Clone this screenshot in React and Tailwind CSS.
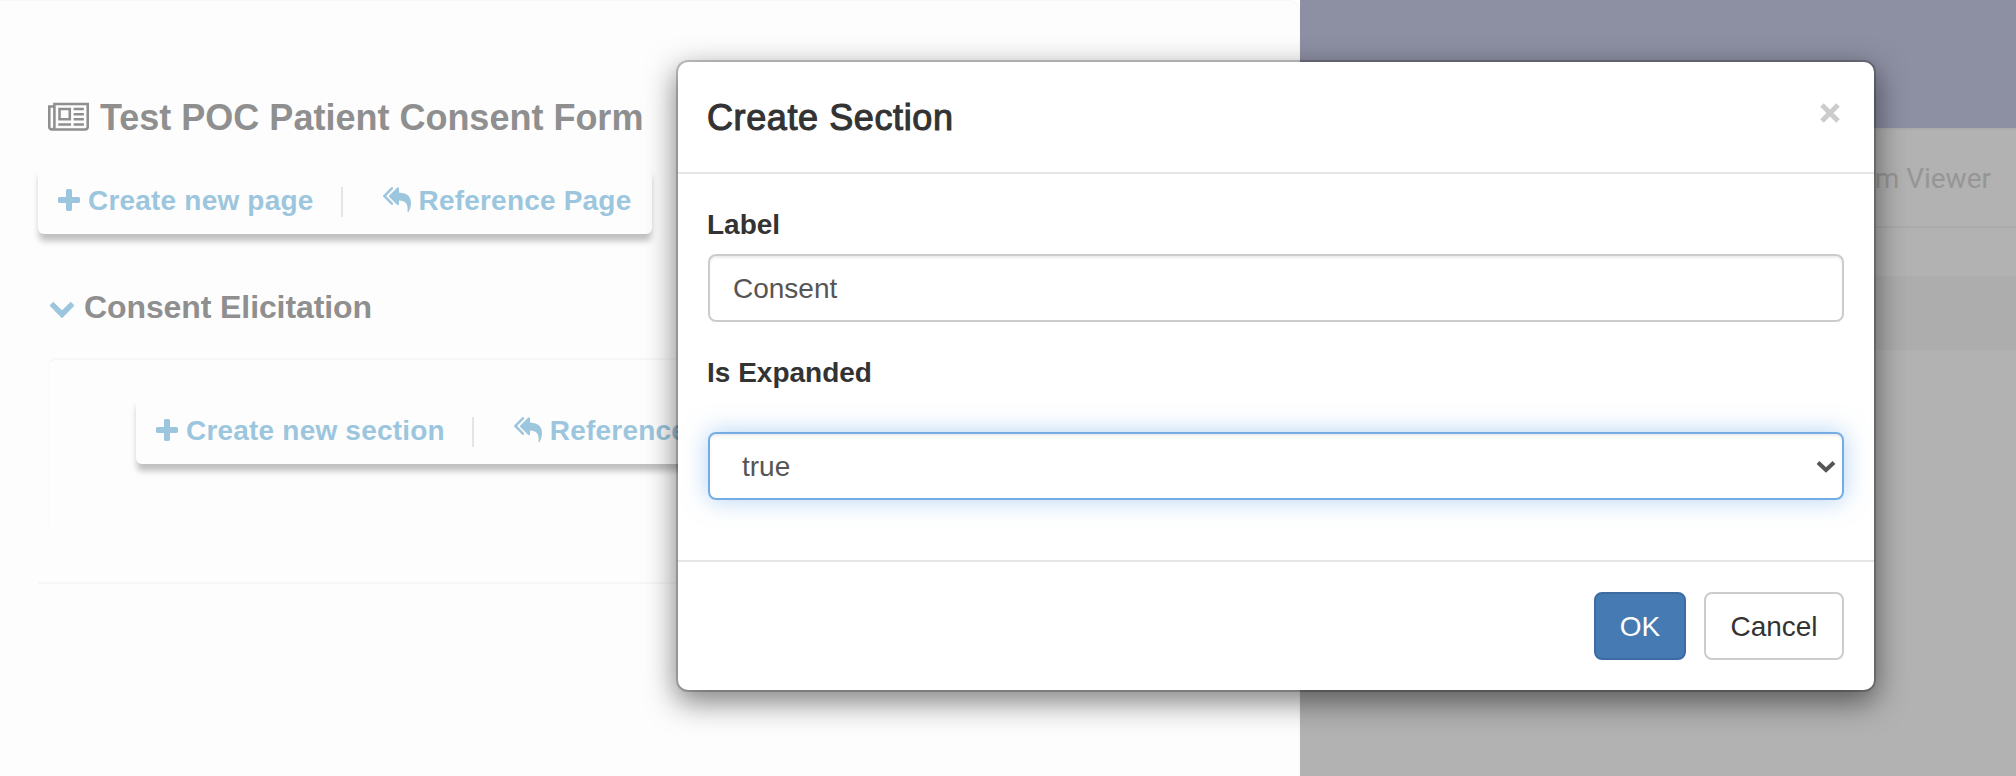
import React from "react";

const ICONS = {
  newspaper: {
    box: "0 0 2048 1792",
    d: "M1024 512h-384v384h384v-384zm128 640v128h-640v-128h640zm0-768v640h-640v-640h640zm640 768v128h-512v-128h512zm0-256v128h-512v-128h512zm0-256v128h-512v-128h512zm0-256v128h-512v-128h512zm-1536 960v-960h-128v960q0 26 19 45t45 19 45-19 19-45zm1664 0v-1088h-1536v1088q0 33-11 64h1483q26 0 45-19t19-45zm128-1216v1216q0 80-56 136t-136 56h-1664q-80 0-136-56t-56-136v-1088h256v-128h1792z",
  },
  plus: {
    box: "192 0 1408 1792",
    d: "M1600 736v192q0 40-28 68t-68 28h-416v416q0 40-28 68t-68 28h-192q-40 0-68-28t-28-68v-416h-416q-40 0-68-28t-28-68v-192q0-40 28-68t68-28h416v-416q0-40 28-68t68-28h192q40 0 68 28t28 68v416h416q40 0 68 28t28 68z",
  },
  replyAll: {
    box: "0 0 1792 1792",
    d: "M640 1082v70q0 42-39 59-13 5-25 5-27 0-45-19l-512-512q-19-19-19-45t19-45l512-512q29-31 70-14 39 17 39 59v69l-397 398q-19 19-19 45t19 45zm1152 58q0 58-17 133.5t-38.5 138-48 125-40.5 90.5l-20 40q-8 17-28 17-6 0-9-1-25-8-23-34 43-400-106-565-64-71-170.5-110.5t-267.5-52.5v251q0 42-39 59-13 5-25 5-27 0-45-19l-512-512q-19-19-19-45t19-45l512-512q29-31 70-14 39 17 39 59v262q411 28 599 221 169 173 169 509z",
  },
};

function Icon({ name, className }) {
  return (
    <svg viewBox={ICONS[name].box} fill="currentColor" className={className} aria-hidden="true">
      <path d={ICONS[name].d} />
    </svg>
  );
}

function Toolbar({ create, reference, className }) {
  return (
    <div className={`flex h-[68px] items-start rounded-[6px] bg-[#fdfdfd] pt-[21px] pl-5 text-[28px] leading-[28px] font-bold tracking-[0.2px] whitespace-nowrap text-[#9cc6dd] shadow-[0_8px_6px_-1px_#c0c0c0] ${className}`}>
      <Icon name="plus" className="mr-2 h-7 w-[22px] shrink-0" />
      <span>{create}</span>
      <span className="ml-[27px] h-[30px] w-0.5 shrink-0 bg-[#e4e4e4]" />
      <Icon name="replyAll" className="-mt-px mr-2 ml-10 h-7 w-7 shrink-0" />
      <span>{reference}</span>
    </div>
  );
}

export default function App() {
  return (
    <div className="relative flex h-[776px] w-[2016px] overflow-hidden bg-white font-['Liberation_Sans',Arial,sans-serif]">
      <main className="w-[1300px] rounded-tr-[10px] border-t border-r border-[#f8f8f8] bg-[#fdfdfd] pl-[38px]">
        <h1 className="mt-[95px] ml-[10px] flex h-[44px] items-center text-[36px] font-bold text-[#8f8f8f]">
          <Icon name="newspaper" className="-mt-px mr-[11px] h-9 w-[41px]" />
          <span>Test POC Patient Consent Form</span>
        </h1>
        <Toolbar create="Create new page" reference="Reference Page" className="mt-[26px] w-[614px]" />
        <h2 className="mt-[50px] ml-[10px] flex h-[46px] items-center text-[32px] font-bold text-[#8f8f8f]">
          <svg viewBox="0 0 28 22" className="mt-1 mr-2 h-[22px] w-7" aria-hidden="true">
            <path d="M2 7.5 5.3 4.3 14 12.8 22.7 4.3 26 7.5 14 19.8Z" fill="#9cc6dd" stroke="#9cc6dd" strokeLinejoin="round" />
          </svg>
          <span className="tracking-[-0.1px]">Consent Elicitation</span>
        </h2>
        <div className="mt-[28px] ml-[10px] h-[170px] rounded-tl-[8px] border-t-2 border-l border-t-[#f7f7f7] border-l-[#fafafa] pt-[36px] pl-[87px]">
          <Toolbar create="Create new section" reference="Reference Section" className="w-[680px]" />
        </div>
        <div className="mt-[54px] h-0.5 bg-[#f7f7f7]" />
      </main>
      <aside className="w-[716px] bg-[#b2b2b2] font-[Roboto,sans-serif]">
        <div className="h-32 bg-[#8d8fa3]" />
        <div className="flex h-[100px] items-center justify-end border-t-2 border-b-2 border-t-[#acacac] border-b-[#aaaaaa] pt-0.5 pr-[25px] text-[28px] text-[#969696]">
          Form Viewer
        </div>
        <div className="mt-12 h-[74px] bg-[#adadad]" />
      </aside>

      <section className="absolute top-[62px] left-[678px] w-[1196px] rounded-[10px] bg-white text-[28px] leading-10 text-[#333] shadow-[0_0_0_2px_rgba(0,0,0,0.2),0_10px_30px_2px_rgba(0,0,0,0.5)]">
        <header className="flex h-[112px] justify-between border-b-2 border-[#e5e5e5] px-[29px] pt-[30px]">
          <h2 className="text-[36px] leading-[51px] font-medium tracking-[0.6px] [-webkit-text-stroke:1.1px_#333]">Create Section</h2>
          <svg viewBox="0 0 20 20" className="mt-[11px] mr-[5px] h-5 w-5" aria-hidden="true">
            <path d="M2 2 18 18M18 2 2 18" stroke="#cccccc" strokeWidth="5" />
          </svg>
        </header>
        <div className="flex h-[386px] flex-col px-[30px] pt-[31px]">
          <label className="-ml-px font-bold">Label</label>
          <div className="mt-[9px] flex h-[68px] shrink-0 items-center rounded-[8px] border-2 border-[#ccc] px-[23px] pt-px text-[#555] shadow-[inset_0_2px_2px_rgba(0,0,0,0.075)]">Consent</div>
          <label className="mt-[31px] -ml-px font-bold">Is Expanded</label>
          <div className="mt-[39px] flex h-[68px] shrink-0 items-center justify-between rounded-[8px] border-2 border-[#74ade4] pt-px pr-[6px] pl-8 text-[#555] shadow-[inset_0_2px_2px_rgba(0,0,0,0.075),0_0_24px_rgba(102,165,233,0.5)]">
            <span>true</span>
            <svg viewBox="0 0 20 12" className="h-3 w-5" aria-hidden="true">
              <path d="M2 1.5 10 9 18 1.5" fill="none" stroke="#555" strokeWidth="4" />
            </svg>
          </div>
        </div>
        <footer className="flex h-[130px] justify-end gap-[18px] border-t-2 border-[#e5e5e5] px-[30px] pt-[30px]">
          <button className="h-[68px] w-[92px] rounded-[8px] border-2 border-[#3d6ca3] bg-[#467ab3] pt-px text-white">OK</button>
          <button className="h-[68px] w-[140px] rounded-[8px] border-2 border-[#ccc] bg-white pt-px">Cancel</button>
        </footer>
      </section>
    </div>
  );
}
